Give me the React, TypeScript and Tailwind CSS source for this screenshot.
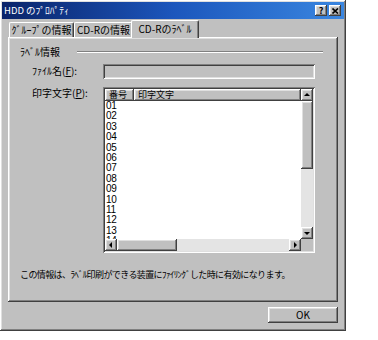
const raised = "shadow-[inset_-1px_-1px_#404040,inset_1px_1px_#ffffff,inset_-2px_-2px_#808080,inset_2px_2px_#dfdfdf]"
const sunken = "shadow-[inset_1px_1px_#808080,inset_-1px_-1px_#ffffff,inset_2px_2px_#404040,inset_-2px_-2px_#dfdfdf]"

function Tri({ dir }: { dir: "up" | "down" | "left" | "right" }) {
  const pts = {
    up: "1,5 4,2 7,5",
    down: "1,3 4,6 7,3",
    left: "5,1 2,4 5,7",
    right: "3,1 6,4 3,7",
  }[dir]
  return (
    <svg width="8" height="8" viewBox="0 0 8 8">
      <polygon points={pts} fill="#000" />
    </svg>
  )
}

function SBtn({ dir }: { dir: "up" | "down" | "left" | "right" }) {
  return (
    <div className={`w-[12px] h-[12px] shrink-0 bg-[#c0c0c0] flex items-center justify-center ${raised}`}>
      <Tri dir={dir} />
    </div>
  )
}

function Tab({ label, width, active = false }: { label: string; width: string; active?: boolean }) {
  if (active) {
    return (
      <div className={`${width} -ml-[2px] relative z-10 h-[18px] -mb-[1px] bg-[#c0c0c0] flex justify-center pt-[2px] border-t border-l border-white border-r border-r-[#404040] rounded-t-[2px] shadow-[inset_-1px_0_#808080]`}>
        <span className="text-[10px] leading-[12px] whitespace-nowrap">{label}</span>
      </div>
    )
  }
  return (
    <div className={`${width} h-[15px] bg-[#c0c0c0] flex justify-center pt-[1px] border-t border-l border-white border-r border-r-[#404040] rounded-t-[2px] shadow-[inset_-1px_0_#808080]`}>
      <span className="text-[10px] leading-[12px] whitespace-nowrap">{label}</span>
    </div>
  )
}

// 14 is partly hidden behind the scrollbar, as in the picture
const rows = ["01", "02", "03", "04", "05", "06", "07", "08", "09", "10", "11", "12", "13", "14"]

export default function App() {
  return (
    <div className="w-[378px] h-[340px] bg-white [font-family:'Noto_Sans_CJK_JP',sans-serif] text-black">
      <div className={`w-[346px] h-[331px] bg-[#c0c0c0] p-[2px] flex flex-col ${raised}`}>
        {/* title bar */}
        <div className="h-[17px] shrink-0 bg-gradient-to-r from-[#0a246a] via-[#1c56bc] to-[#3a86e0] flex items-center pl-[2px] pr-[3px]">
          <span className="text-white text-[9.5px] leading-none whitespace-nowrap">HDD のﾌﾟﾛﾊﾟﾃｨ</span>
          <div className="ml-auto flex gap-[2px]">
            <div className={`w-[12px] h-[11px] bg-[#c0c0c0] flex items-center justify-center ${raised}`}>
              <span className="text-[9px] font-bold leading-none">?</span>
            </div>
            <div className={`w-[12px] h-[11px] bg-[#c0c0c0] flex items-center justify-center ${raised}`}>
              <svg width="7" height="6" viewBox="0 0 7 6">
                <path d="M0.5 0.5 L6 5.5 M6 0.5 L0.5 5.5" stroke="#000" strokeWidth="1.6" />
              </svg>
            </div>
          </div>
        </div>

        {/* tabs */}
        <div className="ml-[7px] mt-[1px] h-[17px] shrink-0 flex items-end">
          <Tab label="ｸﾞﾙｰﾌﾟの情報" width="w-[65px]" />
          <Tab label="CD-Rの情報" width="w-[59px]" />
          <Tab label="CD-Rのﾗﾍﾞﾙ" width="w-[68px]" active />
        </div>

        {/* panel */}
        <div className={`ml-[6px] w-[330px] h-[265px] shrink-0 bg-[#c0c0c0] ${raised} flex flex-col pt-[9px] pl-[12px]`}>
          <div className="flex items-center h-[12px]">
            <span className="text-[10px] leading-none whitespace-nowrap">ﾗﾍﾞﾙ情報</span>
            <div className="ml-[17px] w-[246px] h-[2px] border-t border-[#808080] border-b border-b-white" />
          </div>

          <div className="mt-[6px] flex">
            <div className="w-[83px] pl-[12px] pt-[1px] text-[10px] leading-[12px] whitespace-nowrap">
              ﾌｧｲﾙ名(<span className="underline">F</span>):
            </div>
            <div className={`w-[212px] h-[15px] bg-[#c0c0c0] ${sunken}`} />
          </div>

          <div className="mt-[8px] flex">
            <div className="w-[83px] pl-[12px] text-[10px] leading-[12px] whitespace-nowrap">
              印字文字(<span className="underline">P</span>):
            </div>
            <div className={`w-[212px] h-[166px] bg-white p-[2px] ${sunken}`}>
              <div className="flex h-full">
                <div className="flex-1 flex flex-col overflow-hidden">
                  <div className="flex h-[12px] shrink-0">
                    <div className={`w-[29px] bg-[#c0c0c0] ${raised} pl-[4px] flex items-center`}>
                      <span className="text-[9px] leading-[10px] whitespace-nowrap">番号</span>
                    </div>
                    <div className={`flex-1 bg-[#c0c0c0] ${raised} pl-[4px] flex items-center`}>
                      <span className="text-[9px] leading-[10px] whitespace-nowrap">印字文字</span>
                    </div>
                  </div>
                  <div className="flex-1 overflow-hidden pl-[1px]">
                    {rows.map((r) => (
                      <div key={r} className="h-[10.4px] text-[10px] leading-[10.4px] [font-family:'Liberation_Sans',sans-serif] tracking-[-0.3px]">
                        {r}
                      </div>
                    ))}
                  </div>
                  <div className="h-[12px] shrink-0 flex bg-[#e4e4e4]">
                    <SBtn dir="left" />
                    <div className={`w-[60px] h-[12px] bg-[#c0c0c0] ${raised}`} />
                    <div className="flex-1" />
                    <SBtn dir="right" />
                  </div>
                </div>
                <div className="w-[12px] flex flex-col bg-[#e4e4e4]">
                  <SBtn dir="up" />
                  <div className={`w-[12px] h-[68px] bg-[#c0c0c0] ${raised}`} />
                  <div className="flex-1" />
                  <SBtn dir="down" />
                  <div className="h-[12px] bg-[#c0c0c0]" />
                </div>
              </div>
            </div>
          </div>

          <div className="mt-[16px] text-[9px] leading-[12px] tracking-[-0.6px] whitespace-nowrap">
            この情報は、ﾗﾍﾞﾙ印刷ができる装置にﾌｧｲﾘﾝｸﾞした時に有効になります。
          </div>
        </div>

        {/* footer */}
        <div className="flex justify-end pr-[6px] mt-[5px]">
          <button className={`w-[70px] h-[16px] bg-[#c0c0c0] ${raised} text-[10px] leading-none`}>OK</button>
        </div>
      </div>
    </div>
  )
}
